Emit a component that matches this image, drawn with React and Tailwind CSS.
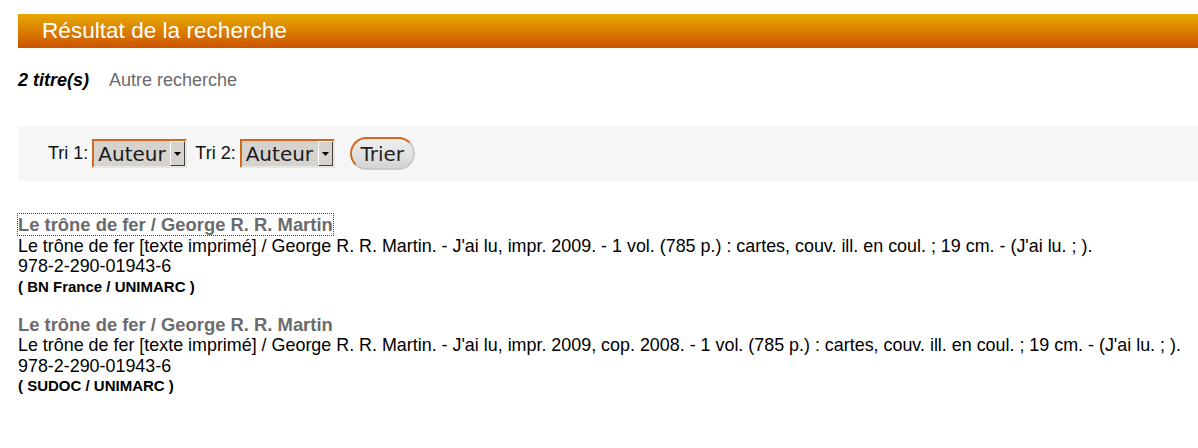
export default function App() {
  const sel = (
    <div className="flex h-[29px] w-[95px] items-stretch border-2 border-t-[#d2691e] border-l-[#d2691e] border-r-[#e8e6e2] border-b-[#e8e6e2] bg-[#d6d3ce]">
      <div className="flex-1 pl-[4px] text-[20px] leading-[26px] text-[#1a1a1a] [font-family:'DejaVu_Sans',sans-serif]">Auteur</div>
      <div className="flex w-[15px] items-center justify-center border border-t-white border-l-white border-r-[#404040] border-b-[#404040] bg-[#d6d3ce]">
        <svg width="7" height="4" viewBox="0 0 7 4"><path d="M0 0h7L3.5 4z" fill="#000" /></svg>
      </div>
    </div>
  );
  const results = [
    { d: "Le trône de fer [texte imprimé] / George R. R. Martin. - J'ai lu, impr. 2009. - 1 vol. (785 p.) : cartes, couv. ill. en coul. ; 19 cm. - (J'ai lu. ; ).", s: "( BN France / UNIMARC )", focus: true },
    { d: "Le trône de fer [texte imprimé] / George R. R. Martin. - J'ai lu, impr. 2009, cop. 2008. - 1 vol. (785 p.) : cartes, couv. ill. en coul. ; 19 cm. - (J'ai lu. ; ).", s: "( SUDOC / UNIMARC )" },
  ];
  return (
    <div className="min-h-[448px] w-[1198px] bg-white pt-[14px] pl-[18px] [font-family:'Liberation_Sans',Arial,sans-serif]">
      <div className="h-[34px] bg-gradient-to-b from-[#e6a800] to-[#cc5200] pl-[24px] text-[22.6px] leading-[34px] text-white">Résultat de la recherche</div>
      <div className="mt-[21px] flex items-center text-[18px] leading-[22px]">
        <span className="font-bold italic text-black">2 titre(s)</span>
        <span className="ml-[20px] text-[#6b6b6b]">Autre recherche</span>
      </div>
      <div className="mt-[35px] flex h-[55px] items-center bg-[#f6f6f6] pl-[30px] text-[18px] text-[#111]">
        <span className="mr-[4px]">Tri 1:</span>
        {sel}
        <span className="ml-[8px] mr-[4px]">Tri 2:</span>
        {sel}
        <div className="ml-[15px] flex h-[33px] w-[65px] items-center justify-center rounded-full border-2 border-t-[#d2691e] border-l-[#d2691e] border-r-[#c8c8c8] border-b-[#c8c8c8] bg-gradient-to-b from-[#f0f0f0] to-[#d4d4d4] text-[20px] text-[#222] [font-family:'DejaVu_Sans',sans-serif]">Trier</div>
      </div>
      <div className="mt-[34px] flex flex-col gap-[18px] text-[17.9px] leading-[20.5px] text-black">
        {results.map((r, i) => (
          <div key={i}>
            <div>
              <span className={"text-[18.4px] font-bold text-[#6b6b6b] " + (r.focus ? "outline outline-1 outline-dotted outline-[#444]" : "")}>Le trône de fer / George R. R. Martin</span>
            </div>
            <div>{r.d}</div>
            <div>978-2-290-01943-6</div>
            <div className="text-[15px] font-bold leading-[20px]">{r.s}</div>
          </div>
        ))}
      </div>
    </div>
  );
}
